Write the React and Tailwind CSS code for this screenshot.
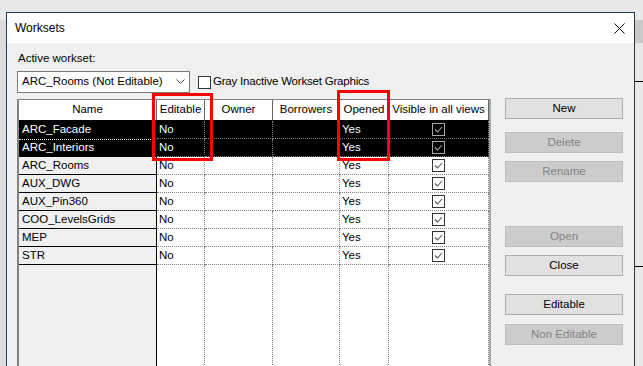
import React from "react";

const rows = [
  { name: "ARC_Facade", sel: true },
  { name: "ARC_Interiors", sel: true, focus: true },
  { name: "ARC_Rooms" },
  { name: "AUX_DWG" },
  { name: "AUX_Pin360" },
  { name: "COO_LevelsGrids" },
  { name: "MEP" },
  { name: "STR" },
];

const cols = [
  { label: "Editable", w: "w-[48px]" },
  { label: "Owner", w: "w-[68px]" },
  { label: "Borrowers", w: "w-[67px]" },
  { label: "Opened", w: "w-[49px]" },
  { label: "Visible in all views", w: "w-[100px]" },
];

const Check = ({ sel }) => (
  <svg width="13" height="13" viewBox="0 0 13 13" className="block">
    <rect x="0.5" y="0.5" width="12" height="12" fill={sel ? "#000" : "#fff"} stroke={sel ? "#a8a8a8" : "#333"} />
    <polyline points="3,6.5 5.5,9 10,4" fill="none" stroke={sel ? "#a8a8a8" : "#555"} strokeWidth="1.1" />
  </svg>
);

const Btn = ({ label, disabled, className = "" }) => (
  <div
    className={
      "h-[21px] border flex items-center justify-center " +
      (disabled
        ? "border-[#bfbfbf] bg-[#cccccc] text-[#838383] "
        : "border-[#adadad] bg-[#e1e1e1] text-black ") +
      className
    }
  >
    {label}
  </div>
);

export default function App() {
  return (
    <div className="relative w-[643px] h-[366px] overflow-hidden bg-[#e8e8e8] font-['Liberation_Sans',sans-serif] text-[11.5px] text-black">
      {/* desktop behind */}
      <div className="absolute left-[634px] top-[20px] w-[9px] h-[23px] bg-[#c9c9c9]" />
      <div className="absolute left-[634px] top-[81px] w-[9px] h-px bg-black" />
      <div className="absolute left-[634px] top-[266px] w-[9px] h-px bg-black" />
      <div className="absolute left-0 top-[20px] w-[6px] h-[346px] bg-[#dcdcdc]" />

      {/* dialog */}
      <div className="absolute left-[6px] top-[12px] w-[629px] h-[400px] border border-[#1d3c58] bg-[#f0f0f0] flex flex-col">
        <div className="h-[30px] bg-white flex items-center justify-between pl-[8px] pr-[9px] text-[12px]">
          <span>Worksets</span>
          <svg width="11" height="11" viewBox="0 0 11 11">
            <path d="M0.5 0.5 L10.5 10.5 M10.5 0.5 L0.5 10.5" stroke="#000" strokeWidth="1" />
          </svg>
        </div>

        <div className="flex-1 flex pl-[10px] gap-[14px]">
          <div className="w-[474px] flex flex-col">
            <div className="mt-[7px] h-[16px] leading-[16px] pl-[1px]">Active workset:</div>
            <div className="mt-[5px] flex items-center gap-[8px]">
              <div className="w-[173px] h-[22px] border border-[#7a7a7a] bg-white flex items-center justify-between pl-[4px] pr-[4px]">
                <span>ARC_Rooms (Not Editable)</span>
                <svg width="9" height="6" viewBox="0 0 9 6">
                  <polyline points="0.5,0.5 4.5,4.5 8.5,0.5" fill="none" stroke="#444" strokeWidth="1" />
                </svg>
              </div>
              <div className="w-[13px] h-[13px] border border-[#333] bg-white" />
              <span className="-ml-[6px] tracking-[-0.2px]">Gray Inactive Workset Graphics</span>
            </div>

            <div className="mt-[6px] flex-1 flex flex-col border-l-2 border-t border-r-2 border-[#828282] border-r-[#a8a8a8]">
              <div className="flex h-[21px] bg-white border-b border-black">
                <div className="w-[138px] border-r border-[#666] flex items-center justify-center">Name</div>
                {cols.map((c) => (
                  <div key={c.label} className={c.w + " border-r border-[#666] flex items-center justify-center whitespace-nowrap overflow-hidden"}>
                    {c.label}
                  </div>
                ))}
              </div>

              {rows.map((r) => (
                <div key={r.name} className={"flex h-[18px] " + (r.sel ? "bg-black" : "bg-white")}>
                  <div
                    className={
                      "w-[138px] border-r border-r-black border-b border-b-black pl-[3px] flex items-center " +
                      (r.sel ? "bg-black text-white " : "bg-[#f0f0f0] ") +
                      (r.focus ? "border-t border-t-white border-dotted border-r-solid" : "")
                    }
                  >
                    {r.name}
                  </div>
                  {cols.map((c, i) => (
                    <div
                      key={c.label}
                      className={
                        c.w +
                        " border-r border-b border-dotted border-[#808080] flex items-center " +
                        (i === 4 ? "justify-center " : "pl-[2px] ") +
                        (r.sel ? "text-[#e6ffff]" : "text-black")
                      }
                    >
                      {i === 0 ? "No" : i === 3 ? "Yes" : i === 4 ? <Check sel={r.sel} /> : null}
                    </div>
                  ))}
                </div>
              ))}

              <div className="flex flex-1">
                <div className="w-[138px] border-r border-black bg-[#f0f0f0]" />
                {cols.map((c) => (
                  <div key={c.label} className={c.w + " border-r border-dotted border-[#808080] bg-white"} />
                ))}
              </div>
            </div>
          </div>

          <div className="w-[118px] flex flex-col pt-[55px]">
            <Btn label="New" />
            <Btn label="Delete" disabled className="mt-[13px]" />
            <Btn label="Rename" disabled className="mt-[8px]" />
            <Btn label="Open" disabled className="mt-[44px]" />
            <Btn label="Close" className="mt-[8px]" />
            <Btn label="Editable" className="mt-[18px]" />
            <Btn label="Non Editable" disabled className="mt-[9px]" />
          </div>
        </div>
      </div>

      {/* annotations */}
      <div className="absolute left-[152px] top-[93px] w-[61px] h-[68px] border-[3px] border-[#ff0000]" />
      <div className="absolute left-[337px] top-[90px] w-[53px] h-[71px] border-[3px] border-[#ff0000]" />
    </div>
  );
}
